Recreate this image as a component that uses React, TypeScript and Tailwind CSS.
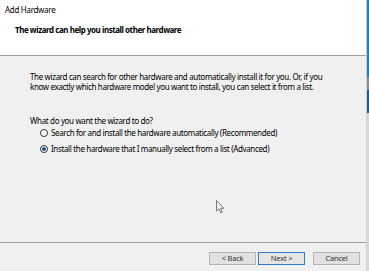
import React from "react";

const font = { fontFamily: '"Noto Sans", "Open Sans", sans-serif' };

function Radio({ checked }: { checked?: boolean }) {
  return (
    <span className="relative mr-[3px] flex h-[8px] w-[8px] items-center justify-center rounded-full border border-[#333] bg-white">
      {checked && <span className="h-[4px] w-[4px] rounded-full bg-[#1a4f9c]" />}
    </span>
  );
}

function WizButton({ label, primary }: { label: string; primary?: boolean }) {
  return (
    <button
      className={`flex h-[13px] w-[47px] items-center justify-center border text-[7.5px] leading-none tracking-[-0.2px] text-[#333] ${
        primary ? "border-[#2a7fd4] bg-[#e5e5e5]" : "border-[#b4b4b4] bg-[#e1e1e1]"
      }`}
    >
      {label}
    </button>
  );
}

function Cursor() {
  return (
    <svg className="absolute left-[216px] top-[200px]" width="9" height="14" viewBox="0 0 9 14">
      <path d="M0.5 0.5 L0.5 11 L3 8.8 L4.8 12.8 L6.3 12.1 L4.6 8.3 L7.8 8.3 Z" fill="#f4f4f4" stroke="#777" strokeWidth="1" />
    </svg>
  );
}

export default function App() {
  return (
    <div className="flex h-[271px] w-[369px] overflow-hidden bg-[#f0f0f0] text-black" style={font}>
      <div className="relative flex w-[367px] flex-col border-r border-[#cfcfcf]">
        {/* Header */}
        <div className="h-[56px] border-b border-[#a0a0a0] bg-white">
          <div className="pl-[5px] pt-[5px] text-[8px] leading-[10px] tracking-[-0.3px]">Add Hardware</div>
          <div className="pl-[15px] pt-[10px] text-[8px] font-bold leading-[10px] tracking-[-0.45px]">
            The wizard can help you install other hardware
          </div>
        </div>

        {/* Body */}
        <div className="flex-1 pl-[30px] pt-[16px] text-[8px] leading-[10px] tracking-[-0.35px]">
          <p>
            The wizard can search for other hardware and automatically install it for you. Or, if you
            <br />
            know exactly which hardware model you want to install, you can select it from a list.
          </p>
          <p className="mt-[24px]">What do you want the wizard to do?</p>
          <div className="ml-[10px] mt-[2px] flex items-center">
            <Radio />
            <span>Search for and install the hardware automatically (Recommended)</span>
          </div>
          <div className="ml-[10px] mt-[6px] flex items-center">
            <Radio checked />
            <span>Install the hardware that I manually select from a list (Advanced)</span>
          </div>
        </div>

        {/* Footer */}
        <div className="flex h-[29px] items-start justify-end border-t border-[#a0a0a0] pr-[6px] pt-[9px]">
          <WizButton label="< Back" />
          <div className="ml-[2px]">
            <WizButton label="Next >" primary />
          </div>
          <div className="ml-[8px]">
            <WizButton label="Cancel" />
          </div>
        </div>

        <Cursor />
      </div>

      {/* desktop strip behind the window */}
      <div className="flex w-[2px] flex-col">
        <div className="h-[77px] bg-[#1c7fc4]" />
        <div className="h-[13px] bg-[#8a8f96]" />
        <div className="h-[23px] bg-[#1a5f95]" />
        <div className="flex-1 bg-[#d8d8d8]" />
      </div>
    </div>
  );
}
